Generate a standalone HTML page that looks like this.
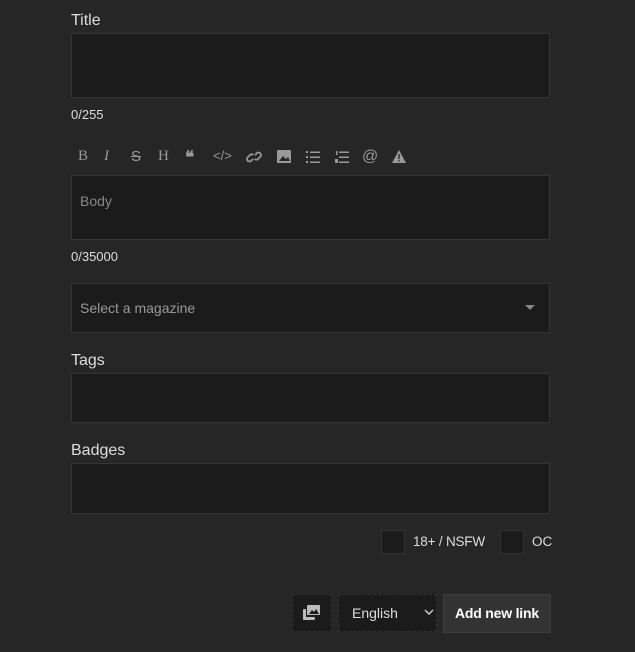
<!DOCTYPE html><html><head><style>
body{margin:0;width:635px;height:652px;background:#262626;font-family:"Liberation Sans",sans-serif;color:#ddd;position:relative;overflow:hidden}
.a{position:absolute}
.in{position:absolute;left:71px;width:477px;background:#1b1b1b;border:1px solid #353535}
.lbl{font-size:16px;color:#ddd}
.sm{font-size:13px;color:#ddd}
.tb span{position:absolute;top:148px;font-size:15px;color:#999}
</style></head><body>
<div class="a lbl" style="left:71px;top:12px">Title</div>
<div class="in" style="top:33px;height:63px"></div>
<div class="a sm" style="left:71px;top:107px">0/255</div>
<div class="tb">
<span style="left:78px;font-family:'Liberation Serif'">B</span>
<span style="left:104px;font-family:'Liberation Serif';font-style:italic">I</span>
<span style="left:131px;text-decoration:line-through">S</span>
<span style="left:158px;font-family:'Liberation Serif'">H</span>
<span style="left:185px;font-weight:bold;font-size:17px">❝</span>
<span style="left:213px;font-size:13px">&lt;/&gt;</span>
<svg class="a" style="left:246px;top:150px" width="16" height="14" fill="none" stroke="#999" stroke-width="1.8"><path d="M7 9l-2 2a2.5 2.5 0 01-3.5-3.5l2.5-2.5a2.5 2.5 0 013.5 0M9 5l2-2a2.5 2.5 0 013.5 3.5l-2.5 2.5a2.5 2.5 0 01-3.5 0"/></svg>
<svg class="a" style="left:277px;top:150px" width="14" height="13"><rect width="14" height="13" rx="1" fill="#999"/><path d="M2 11l4-5 3 3 2-2 2 4z" fill="#262626"/></svg>
<svg class="a" style="left:306px;top:151px" width="14" height="12" fill="#999"><rect x="0" y="0" width="2" height="2"/><rect x="0" y="5" width="2" height="2"/><rect x="0" y="10" width="2" height="2"/><rect x="4" y="0.5" width="10" height="1.5"/><rect x="4" y="5.5" width="10" height="1.5"/><rect x="4" y="10.5" width="10" height="1.5"/></svg>
<svg class="a" style="left:335px;top:151px" width="14" height="12" fill="#999"><rect x="1" y="0" width="1.5" height="4"/><rect x="0" y="8" width="3" height="4"/><rect x="4" y="0.5" width="10" height="1.5"/><rect x="4" y="5.5" width="10" height="1.5"/><rect x="4" y="10.5" width="10" height="1.5"/></svg>
<span style="left:362px;font-size:16px">@</span>
<svg class="a" style="left:392px;top:150px" width="14" height="13"><path d="M7 0L14 13H0z" fill="#999"/><rect x="6.3" y="4" width="1.4" height="5" fill="#262626"/><rect x="6.3" y="10" width="1.4" height="1.4" fill="#262626"/></svg>
</div>
<div class="in" style="top:175px;height:63px"></div>
<div class="a" style="left:80px;top:193px;font-size:14px;color:#888">Body</div>
<div class="a sm" style="left:71px;top:249px">0/35000</div>
<div class="in" style="top:283px;height:48px"></div>
<div class="a" style="left:80px;top:300px;font-size:14px;color:#999">Select a magazine</div>
<svg class="a" style="left:525px;top:305px" width="10" height="5"><path d="M0 0h10L5 5z" fill="#888"/></svg>
<div class="a lbl" style="left:71px;top:352px">Tags</div>
<div class="in" style="top:373px;height:48px"></div>
<div class="a lbl" style="left:71px;top:442px">Badges</div>
<div class="in" style="top:463px;height:49px"></div>
<div class="a" style="left:381px;top:530px;width:22px;height:22px;background:#1b1b1b;border:1px solid #333"></div>
<div class="a" style="left:413px;top:534px;font-size:13.5px;letter-spacing:-0.2px">18+ / NSFW</div>
<div class="a" style="left:500px;top:530px;width:22px;height:22px;background:#1b1b1b;border:1px solid #333"></div>
<div class="a" style="left:532px;top:534px;font-size:13.5px">OC</div>
<div class="a" style="left:292px;top:594px;width:38px;height:36px;background:#1b1b1b;border:1px dashed #333"></div>
<svg class="a" style="left:303px;top:605px" width="17" height="15" fill="#bbb"><rect x="4" y="0" width="13" height="10" rx="1"/><path d="M6 9l3-4 2 2 2-3 3 5z" fill="#1b1b1b"/><rect x="0" y="4" width="3" height="9" rx="1"/><rect x="0" y="12" width="12" height="3" rx="1"/></svg>
<div class="a" style="left:338px;top:594px;width:97px;height:36px;background:#1b1b1b;border:1px dashed #333"></div>
<div class="a" style="left:352px;top:605px;font-size:14px;color:#ddd">English</div>
<svg class="a" style="left:424px;top:609px" width="10" height="6"><path d="M1 1l4 4 4-4" stroke="#ccc" stroke-width="1.5" fill="none"/></svg>
<div class="a" style="left:443px;top:594px;width:106px;height:37px;background:#333;border:1px solid #3d3d3d"></div>
<div class="a" style="left:455px;top:605px;font-size:14px;font-weight:bold;color:#fff;letter-spacing:-0.2px">Add new link</div>
</body></html>
